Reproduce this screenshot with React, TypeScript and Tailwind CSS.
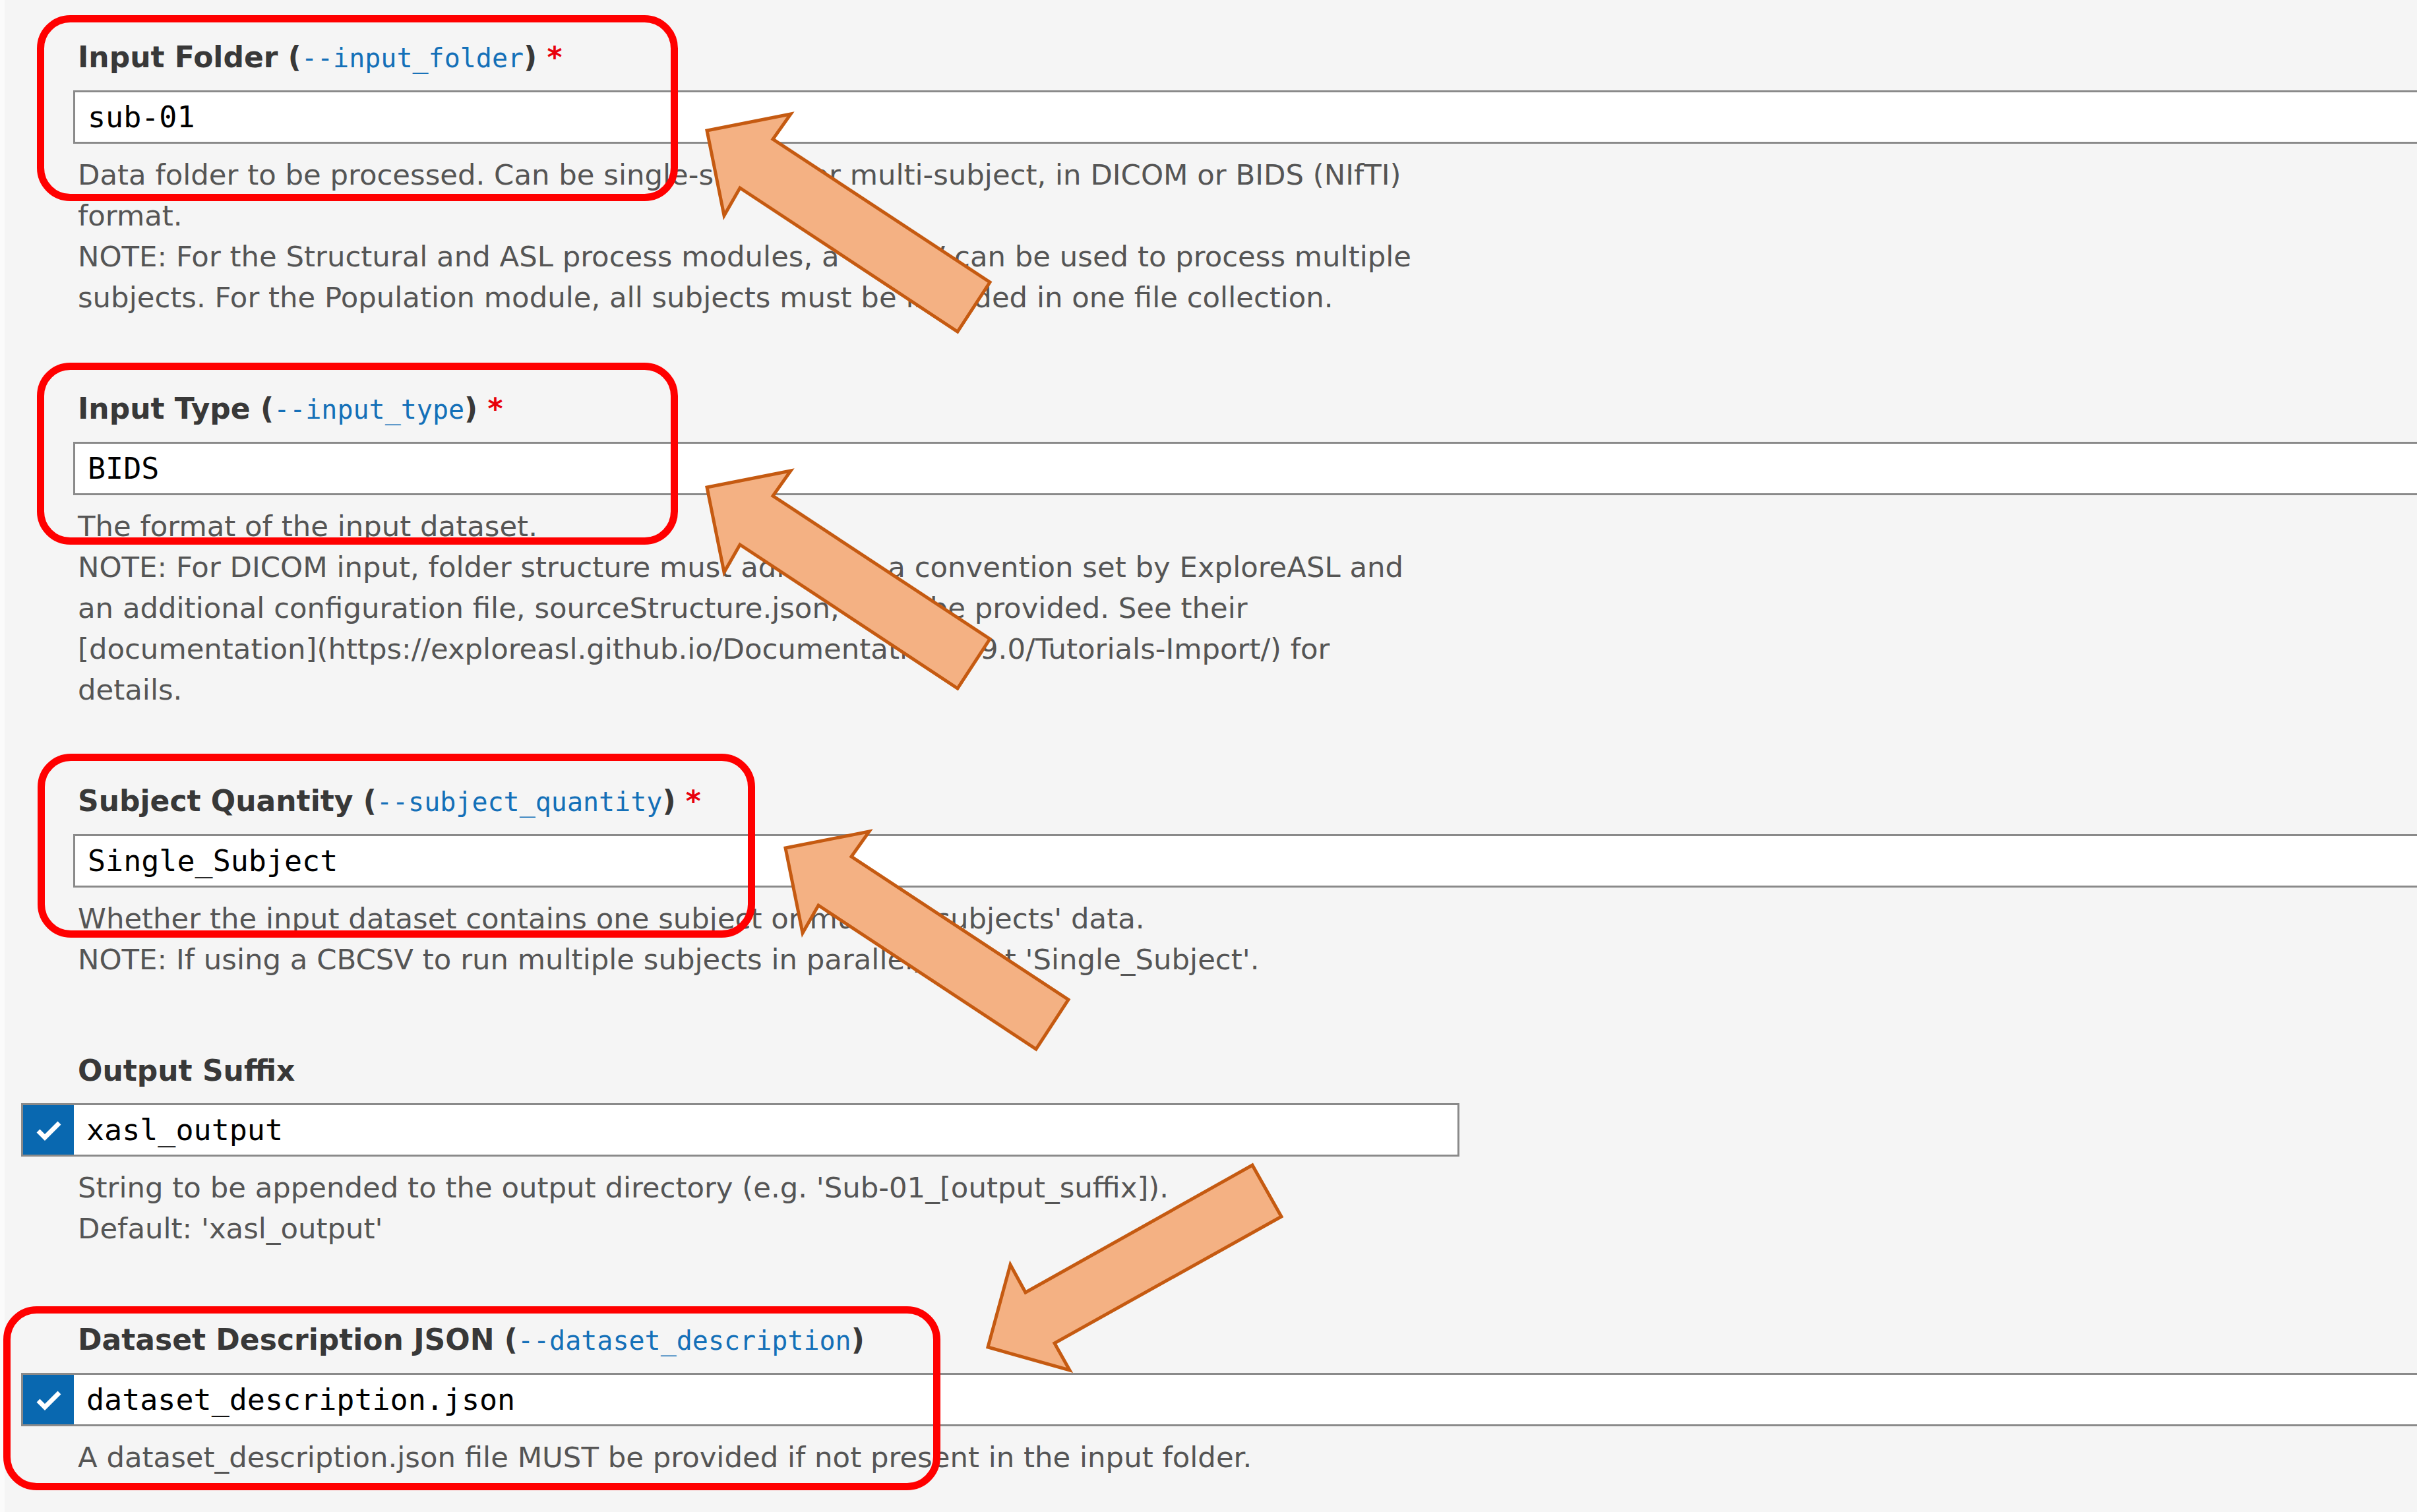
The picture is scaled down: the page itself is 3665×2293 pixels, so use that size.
import React from "react";

const SANS = { fontFamily: '"DejaVu Sans", Verdana, sans-serif' } as const;
const MONO = { fontFamily: '"DejaVu Sans Mono", "Liberation Mono", monospace' } as const;

function Check() {
  return (
    <svg width="40" height="32" viewBox="0 0 40 32">
      <polyline points="4,17 14,27 36,5" fill="none" stroke="#ffffff" strokeWidth="7" strokeLinejoin="miter" />
    </svg>
  );
}

type FieldProps = {
  title: string;
  flag?: string;
  required?: boolean;
  value: string;
  checkbox?: boolean;
  fullWidth?: boolean;
  lines: string[];
  first?: boolean;
};

function Field({ title, flag, required, value, checkbox, fullWidth = true, lines, first }: FieldProps) {
  return (
    <div className={first ? "" : "mt-[113px]"}>
      <div className="pl-[111px] text-[44px] leading-[50px] font-bold text-[#383838] whitespace-nowrap" style={SANS}>
        {title}
        {flag && (
          <>
            {" ("}
            <span className="font-normal text-[40px] text-[#1470b8]" style={MONO}>
              {flag}
            </span>
            {")"}
          </>
        )}
        {required && <span className="text-[#e8000b]"> *</span>}
      </div>
      <div
        className={
          "mt-[24px] flex h-[81px] border-[3px] border-[#8a8a8a] bg-white " +
          (checkbox ? "ml-[25px] " : "ml-[104px] ") +
          (fullWidth ? "-mr-[40px]" : "w-[2181px]")
        }
      >
        {checkbox && (
          <div className="w-[77px] shrink-0 bg-[#0968b0] flex items-center justify-center">
            <Check />
          </div>
        )}
        <div className="flex items-center pl-[19px] text-[45px] text-black" style={MONO}>
          {value}
        </div>
      </div>
      <div className="mt-[16px] pl-[111px] text-[43.4px] leading-[62px] text-[#555555]" style={SANS}>
        {lines.map((l, i) => (
          <div key={i} className="whitespace-nowrap">
            {l}
          </div>
        ))}
      </div>
    </div>
  );
}

export default function App() {
  return (
    <div className="relative w-[3665px] h-[2293px] overflow-hidden bg-[#f5f5f5] flex">
      <div className="w-[7px] shrink-0 bg-[#fbfbfb]" />
      <div className="flex-1 pt-[62px]">
        <Field
          first
          title="Input Folder"
          flag="--input_folder"
          required
          value="sub-01"
          lines={[
            "Data folder to be processed. Can be single-subject or multi-subject, in DICOM or BIDS (NIfTI)",
            "format.",
            "NOTE: For the Structural and ASL process modules, a CBCSV can be used to process multiple",
            "subjects. For the Population module, all subjects must be included in one file collection.",
          ]}
        />
        <Field
          title="Input Type"
          flag="--input_type"
          required
          value="BIDS"
          lines={[
            "The format of the input dataset.",
            "NOTE: For DICOM input, folder structure must adhere to a convention set by ExploreASL and",
            "an additional configuration file, sourceStructure.json, must be provided. See their",
            "[documentation](https://exploreasl.github.io/Documentation/1.9.0/Tutorials-Import/) for",
            "details.",
          ]}
        />
        <Field
          title="Subject Quantity"
          flag="--subject_quantity"
          required
          value="Single_Subject"
          lines={[
            "Whether the input dataset contains one subject or multiple subjects' data.",
            "NOTE: If using a CBCSV to run multiple subjects in parallel, select 'Single_Subject'.",
          ]}
        />
        <Field
          title="Output Suffix"
          value="xasl_output"
          checkbox
          fullWidth={false}
          lines={[
            "String to be appended to the output directory (e.g. 'Sub-01_[output_suffix]).",
            "Default: 'xasl_output'",
          ]}
        />
        <Field
          title="Dataset Description JSON"
          flag="--dataset_description"
          value="dataset_description.json"
          checkbox
          lines={["A dataset_description.json file MUST be provided if not present in the input folder."]}
        />
      </div>

      <svg className="absolute inset-0 pointer-events-none" width="3665" height="2293" viewBox="0 0 3665 2293">
        <g fill="none" stroke="#ff0000" strokeWidth="11">
          <rect x="61.5" y="28.5" width="961" height="271" rx="45" />
          <rect x="61.5" y="555.5" width="961" height="265" rx="45" />
          <rect x="62.5" y="1148.5" width="1077" height="268" rx="45" />
          <rect x="10.5" y="1986.5" width="1410" height="268" rx="45" />
        </g>
        <g fill="#f4b183" stroke="#c55a11" strokeWidth="5" strokeLinejoin="miter">
          <polygon points="1072,198 1199,173 1172,211 1501,428 1452,503 1122,285 1098,327" />
          <polygon points="1072,739 1199,714 1172,752 1501,969 1452,1044 1122,826 1098,868" />
          <polygon points="1191,1286 1318,1261 1291,1299 1620,1516 1571,1591 1241,1373 1217,1415" />
          <polygon points="1498,2043 1532,1918 1555,1960 1899,1767 1943,1845 1599,2037 1622,2078" />
        </g>
      </svg>
    </div>
  );
}
